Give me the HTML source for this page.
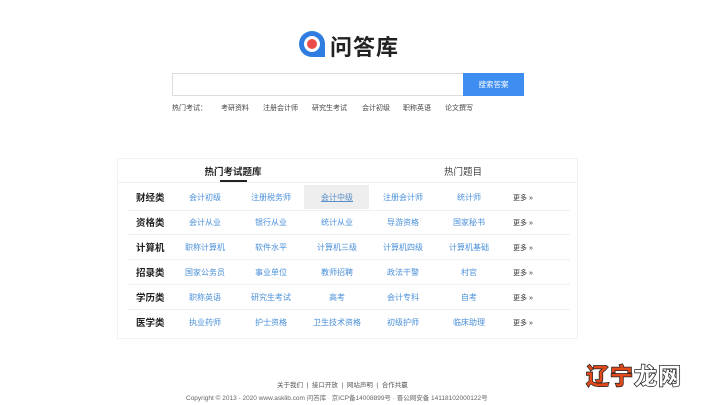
<!DOCTYPE html>
<html><head><meta charset="utf-8"><style>
*{margin:0;padding:0;box-sizing:border-box}
body{width:720px;height:405px;background:#fff;font-family:"Liberation Sans","Noto Sans CJK SC",sans-serif;position:relative;overflow:hidden;color:#333}
.a{position:absolute;white-space:nowrap}
.c{transform:translateX(-50%)}
.lnk{color:#4a90d9;font-size:8px}
.cat{font-size:9.5px;color:#222;font-weight:bold}
.more{font-size:7px;color:#333}
.hot{font-size:7px;color:#444;top:103px}
.hline{position:absolute;left:128px;width:442px;height:1px;background:#f0f0f0}
</style></head><body>
<svg class="a" style="left:297px;top:29px" width="30" height="30" viewBox="0 0 30 30">
<path d="M15 2a13 13 0 1 0 0 26h13V15A13 13 0 0 0 15 2z" fill="#2f7de1"/>
<circle cx="15" cy="15" r="8" fill="#fff"/>
<circle cx="15" cy="15" r="5" fill="#ee4b4b"/>
</svg>
<div class="a" style="left:330px;top:30px;font-size:22px;font-weight:bold;color:#222;letter-spacing:1px">问答库</div>
<div class="a" style="left:172px;top:73px;width:292px;height:23px;border:1px solid #ddd;border-right:none"></div>
<div class="a" style="left:463px;top:73px;width:61px;height:23px;background:#3d8ef0;color:#fff;font-size:7.5px;line-height:23px;text-align:center">搜索答案</div>
<div class="a hot" style="left:172px">热门考试：</div>
<div class="a hot" style="left:221px">考研资料</div>
<div class="a hot" style="left:263px">注册会计师</div>
<div class="a hot" style="left:312px">研究生考试</div>
<div class="a hot" style="left:362px">会计初级</div>
<div class="a hot" style="left:403px">职称英语</div>
<div class="a hot" style="left:445px">论文撰写</div>

<div class="a" style="left:117px;top:158px;width:461px;height:181px;border:1px solid #f2f2f2"></div>
<div class="a c" style="left:233px;top:164px;font-size:9.5px;font-weight:bold;color:#222">热门考试题库</div>
<div class="a" style="left:220px;top:180px;width:27px;height:2px;background:#222"></div>
<div class="a c" style="left:463px;top:164px;font-size:9.5px;color:#444">热门题目</div>
<div class="hline" style="top:182px;left:118px;width:459px"></div>
<div class="a" style="left:304px;top:185px;width:65px;height:24px;background:#eee"></div>

<div class="hline" style="top:210px"></div>
<div class="hline" style="top:234px"></div>
<div class="hline" style="top:259px"></div>
<div class="hline" style="top:284px"></div>
<div class="hline" style="top:309px"></div>

<div id="rows"></div>
<script>
var d=[["财经类","会计初级","注册税务师","会计中级","注册会计师","统计师"],
["资格类","会计从业","银行从业","统计从业","导游资格","国家秘书"],
["计算机","职称计算机","软件水平","计算机三级","计算机四级","计算机基础"],
["招录类","国家公务员","事业单位","教师招聘","政法干警","村官"],
["学历类","职称英语","研究生考试","高考","会计专科","自考"],
["医学类","执业药师","护士资格","卫生技术资格","初级护师","临床助理"]];
var xs=[205,271,337,403,469],h="";
d.forEach(function(r,i){var y=190+i*25;
h+='<div class="a cat" style="left:136px;top:'+y+'px">'+r[0]+'</div>';
for(var j=1;j<6;j++)h+='<div class="a c lnk" style="left:'+xs[j-1]+'px;top:'+(y+2)+'px'+(i==0&&j==3?';text-decoration:underline;color:#5a8fc8':'')+'">'+r[j]+'</div>';
h+='<div class="a more" style="left:513px;top:'+(y+3)+'px">更多 »</div>';});
document.getElementById('rows').innerHTML=h;
</script>

<div class="a" style="left:277px;top:379px;font-size:6.5px;color:#555">关于我们&nbsp;&nbsp;|&nbsp;&nbsp;接口开放&nbsp;&nbsp;|&nbsp;&nbsp;网站声明&nbsp;&nbsp;|&nbsp;&nbsp;合作共赢</div>
<div class="a" style="left:186px;top:392px;font-size:6.5px;color:#666">Copyright © 2013 - 2020 www.asklib.com 问答库&nbsp;&nbsp; 京ICP备14008899号 · 晋公网安备 14118102000122号</div>
<div class="a" style="left:586px;top:357px;font-size:23px;font-weight:bold;letter-spacing:1px;font-family:'Noto Sans CJK SC',sans-serif"><span style="color:#e24a1c;-webkit-text-stroke:1.5px #222;paint-order:stroke fill">辽宁</span><span style="color:#fff;-webkit-text-stroke:1.5px #222;paint-order:stroke fill">龙网</span></div>
</body></html>
